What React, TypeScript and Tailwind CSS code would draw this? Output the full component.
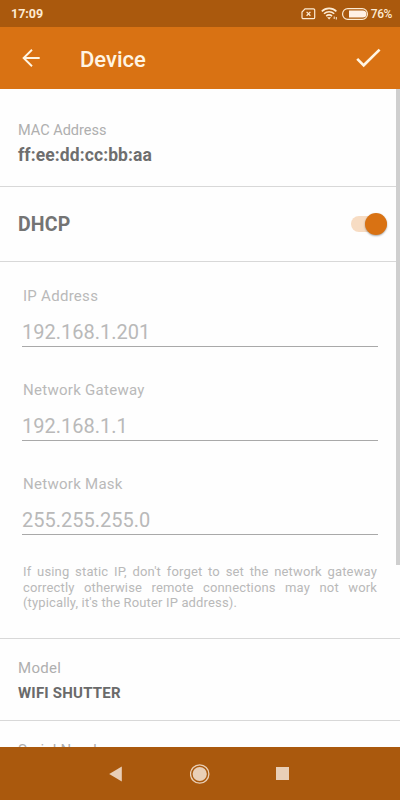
import React from 'react';

const NETWORK_FIELDS = [
  { label: 'IP Address', value: '192.168.1.201' },
  { label: 'Network Gateway', value: '192.168.1.1' },
  { label: 'Network Mask', value: '255.255.255.0' },
];

const StatusBar: React.FC = () => (
  <div className="flex h-[27px] shrink-0 items-center bg-[#aa590d] pl-[11px] pr-2 text-[#fdebd3]">
    <span className="text-[12.500px] font-bold leading-4">17:09</span>
    <svg className="ml-auto" width="15" height="12" viewBox="0 0 15 12" fill="none" stroke="currentColor">
      <path d="M4 .9h8.400a1.300 1.300 0 0 1 1.300 1.300v7.200a1.300 1.300 0 0 1-1.300 1.300H2.300A1.300 1.300 0 0 1 1 9.400V4z" strokeWidth="1.200" />
      <path d="M5.600 3.900l3.800 3.900M9.400 3.900L5.600 7.800" strokeWidth="1.300" />
    </svg>
    <svg className="ml-[5px]" width="17" height="13" viewBox="0 0 17 13" fill="none" stroke="currentColor">
      <path d="M.8 4.300a10.500 10.500 0 0 1 14.600 0M3 6.800a7.200 7.200 0 0 1 10.200 0M5.200 9.100a4.100 4.100 0 0 1 5.800 0" strokeWidth="1.600" />
      <path d="M6.100 10.300h4L8.100 12.500z" fill="currentColor" stroke="none" />
      <path d="M13.200 9.500v2.500M15.300 10v2.500" strokeWidth="1" />
    </svg>
    <svg className="ml-[4px]" width="26" height="12" viewBox="0 0 26 12">
      <rect x="0.600" y="0.600" width="24.800" height="10.800" rx="5.200" fill="none" stroke="currentColor" strokeWidth="1.200" />
      <path d="M7 2.400h13.800a3.600 3.600 0 0 1 0 7.200H7z" fill="#fff0e6" />
    </svg>
    <span className="ml-[3px] text-[12px] font-medium leading-4 tracking-[-0.400px]">76%</span>
  </div>
);

const Header: React.FC = () => (
  <header className="flex h-[62px] shrink-0 items-center bg-[#d97213] pl-[22px] pr-[19px] text-[#fff5e3]">
    <svg width="18" height="18" viewBox="0 0 18 18" fill="none" stroke="currentColor" strokeWidth="1.900">
      <path d="M17.700 9H1.600M10 .8L1.600 9l8.400 8.300" />
    </svg>
    <h1 className="ml-10 pt-[3px] text-[22px] font-medium leading-7">Device</h1>
    <svg className="ml-auto" width="25" height="20" viewBox="0 0 25 20" fill="none" stroke="currentColor" strokeWidth="2.600">
      <path d="M1.200 10.800l6.500 6.500L23.600 1.600" />
    </svg>
  </header>
);

const NavBar: React.FC = () => (
  <nav className="flex h-[53px] shrink-0 items-center bg-[#aa590d] pl-[109px] pr-[111px] text-[#e9cfb7]">
    <svg width="13" height="16" viewBox="0 0 13 16">
      <path d="M12.800.5v15L.2 8z" fill="currentColor" />
    </svg>
    <svg className="ml-[68px] mr-[66px]" width="20" height="20" viewBox="0 0 20 20">
      <circle cx="9.700" cy="10" r="9.200" fill="none" stroke="currentColor" strokeWidth="1.300" />
      <circle cx="9.700" cy="10" r="7.100" fill="currentColor" />
    </svg>
    <span className="size-[13px] bg-[#e9cfb7]"></span>
  </nav>
);

const App: React.FC = () => {
  return (
    <div className="flex h-[800px] w-[400px] flex-col overflow-hidden bg-white font-['Roboto',sans-serif]">
      <StatusBar />
      <Header />

      <main className="relative min-h-0 flex-1 overflow-hidden bg-[#fefefe]">
        <section className="h-[98px] border-b border-[#d8d8d8] px-[18px] pt-8">
          <p className="text-[14.500px] leading-5 text-[#afafaf]">MAC Address</p>
          <p className="mt-[2px] text-[17.500px] font-bold leading-6 tracking-[0.090px] text-[#6e6e6e]">ff:ee:dd:cc:bb:aa</p>
        </section>

        <section className="flex h-[75px] items-center justify-between border-b border-[#d8d8d8] pl-[18px] pr-[13px]">
          <span className="pt-0.5 text-[19.500px] font-bold tracking-[0.200px] text-[#747474]">DHCP</span>
          <div className="flex h-4 w-9 items-center justify-end rounded-full bg-[#f7dcc3]">
            <span className="size-[22px] shrink-0 rounded-full bg-[#d97213] shadow-[0_1px_2px_rgba(0,0,0,0.35)]"></span>
          </div>
        </section>

        {/* Static addressing, greyed out while DHCP is on */}
        <section className="h-[377px] border-b border-[#d8d8d8] px-[22px] pt-[24px]">
          {NETWORK_FIELDS.map((field) => (
            <div key={field.label} className="mb-[33px] h-[61px] border-b border-[#a9a9a9]">
              <p className="pl-px text-[15px] leading-5 tracking-[0.280px] text-[#b9b9b9]">{field.label}</p>
              <p className="mt-[14px] text-[20px] leading-6 text-[#b9b9b9]">{field.value}</p>
            </div>
          ))}
          <p className="-mt-1 pl-px pr-px text-justify text-[13px] leading-[15.500px] tracking-[0.150px] text-[#b9b9b9]">
            If using static IP, don't forget to set the network gateway correctly otherwise remote connections may not work (typically, it's the Router IP address).
          </p>
        </section>

        <section className="h-[82px] border-b border-[#d8d8d8] px-[18px] pt-[19px]">
          <p className="text-[15px] leading-5 tracking-[0.300px] text-[#afafaf]">Model</p>
          <p className="mt-[5px] text-[15px] font-bold leading-5 tracking-[0.200px] text-[#6a6a6a]">WIFI SHUTTER</p>
        </section>

        <section className="px-[18px] pt-[19px]">
          <p className="text-[15px] leading-5 tracking-[0.200px] text-[#afafaf]">Serial Number</p>
        </section>

        <div className="absolute right-0 top-0 h-[476px] w-1 bg-[#cfcfcf]"></div>
      </main>

      <NavBar />
    </div>
  );
};

export default App;
